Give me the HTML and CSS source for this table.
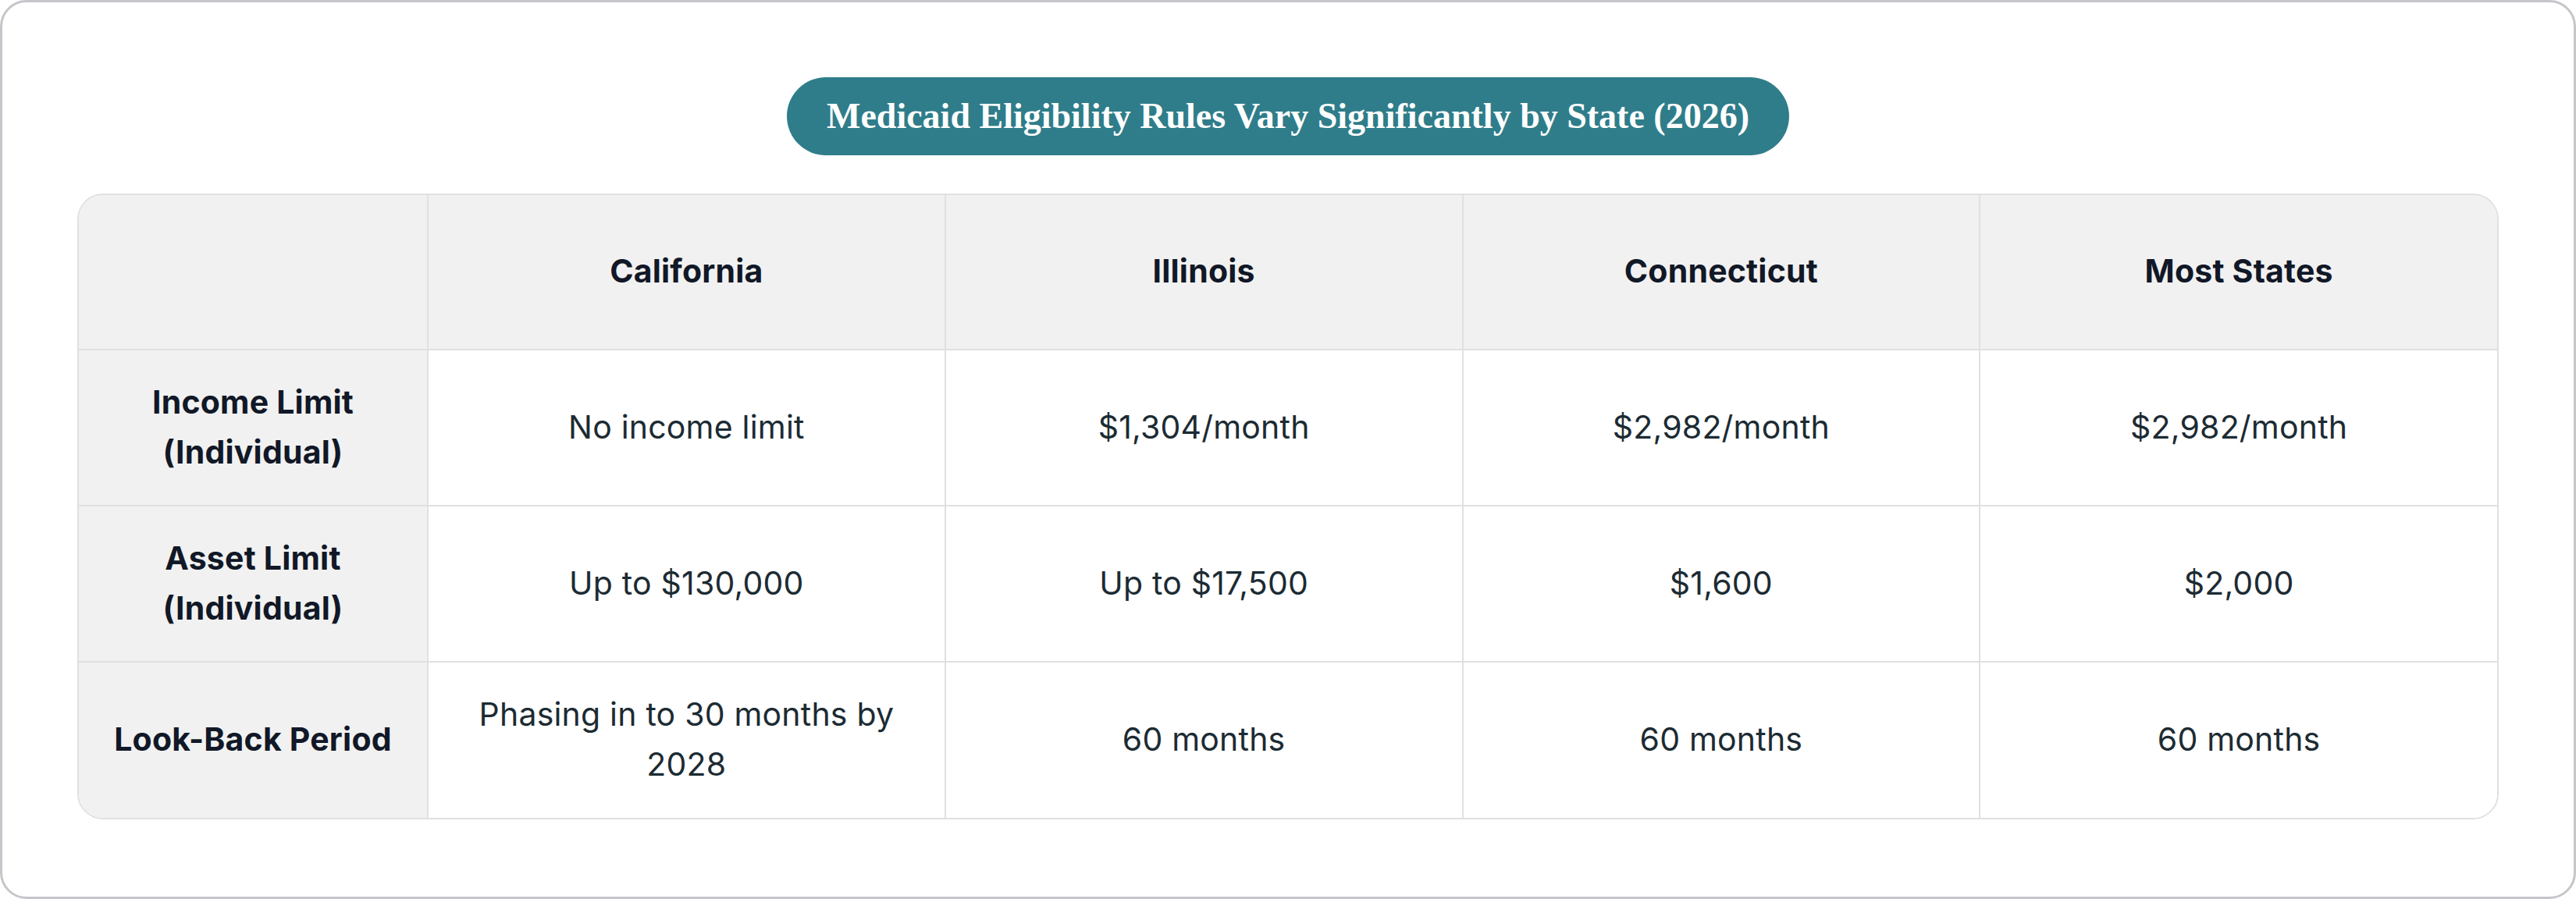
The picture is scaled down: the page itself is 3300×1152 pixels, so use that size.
FILE: index.html
```html
<!DOCTYPE html>
<html lang="en">
<head>
<meta charset="utf-8">
<title>Medicaid Eligibility Rules Vary Significantly by State (2026)</title>
<link rel="stylesheet" href="styles.css">
</head>
<body>
<div class="card">
  <div class="title-row">
    <h1 class="title">Medicaid Eligibility Rules Vary Significantly by State (2026)</h1>
  </div>
  <div class="table-wrap">
    <table class="grid">
      <colgroup>
        <col class="col-label">
        <col><col><col><col>
      </colgroup>
      <thead>
        <tr>
          <th class="corner"></th>
          <th>California</th>
          <th>Illinois</th>
          <th>Connecticut</th>
          <th>Most States</th>
        </tr>
      </thead>
      <tbody>
        <tr>
          <th class="row-head">Income Limit (Individual)</th>
          <td>No income limit</td>
          <td>$1,304/month</td>
          <td>$2,982/month</td>
          <td>$2,982/month</td>
        </tr>
        <tr>
          <th class="row-head">Asset Limit (Individual)</th>
          <td>Up to $130,000</td>
          <td>Up to $17,500</td>
          <td>$1,600</td>
          <td>$2,000</td>
        </tr>
        <tr>
          <th class="row-head nowrap">Look-Back Period</th>
          <td>Phasing in to 30 months by 2028</td>
          <td>60 months</td>
          <td>60 months</td>
          <td>60 months</td>
        </tr>
      </tbody>
    </table>
  </div>
</div>
</body>
</html>
```

FILE: styles.css
```css
* { box-sizing: border-box; }

html, body {
  margin: 0;
  padding: 0;
  background: #ffffff;
}

body {
  width: 3300px;
  height: 1152px;
  font-family: Inter, "Noto Sans", "Liberation Sans", sans-serif;
}

.card {
  width: 3300px;
  height: 1152px;
  border: 3px solid #c5c6ca;
  border-radius: 34px;
  background: #ffffff;
  padding: 96px 96px 0 96px;
  display: flex;
  flex-direction: column;
  gap: 49px;
}

.title-row {
  display: flex;
  justify-content: center;
}

.title {
  margin: 0;
  height: 100px;
  padding: 0 51px;
  border-radius: 50px;
  background: #2f7d8a;
  color: #ffffff;
  font-family: "Liberation Serif", "DejaVu Serif", serif;
  font-weight: 700;
  font-size: 46px;
  line-height: 100px;
  white-space: nowrap;
}

.table-wrap {
  border: 2px solid #dfe0e2;
  border-radius: 33px;
  overflow: hidden;
}

.grid {
  width: 100%;
  border-collapse: collapse;
  table-layout: fixed;
}

.col-label { width: 447px; }

.grid th,
.grid td {
  border: 2px solid #dfe0e2;
  text-align: center;
  vertical-align: middle;
  font-size: 41px;
  letter-spacing: 0.2px;
  line-height: 64px;
  padding: 0 48px 3px;
  height: 200px;
}

.grid thead tr > * { border-top: none; }
.grid tbody tr:last-child > * { border-bottom: none; }
.grid tr > *:first-child { border-left: none; }
.grid tr > *:last-child { border-right: none; }

.grid thead th {
  background: #f1f1f1;
  color: #111827;
  font-weight: 700;
  height: 198px;
}

.grid .row-head {
  background: #f1f1f1;
  color: #111827;
  font-weight: 700;
  padding: 0 20px 3px;
}

.grid .nowrap { white-space: nowrap; }

.grid td {
  background: #ffffff;
  color: #1c2b33;
  font-weight: 400;
}
```
